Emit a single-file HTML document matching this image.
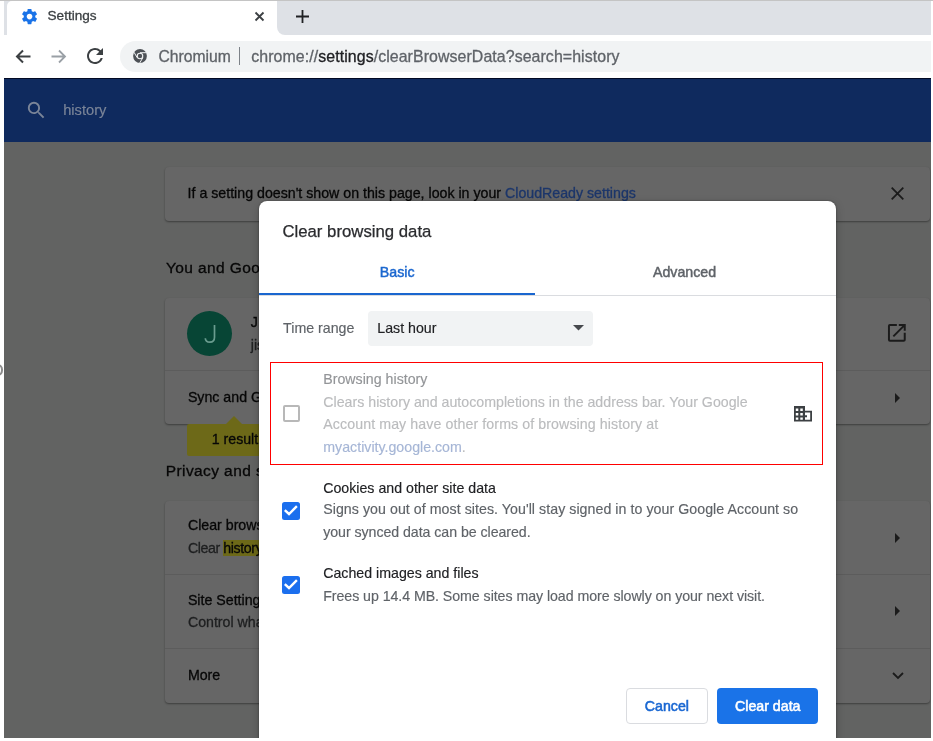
<!DOCTYPE html>
<html><head><meta charset="utf-8">
<style>
html,body{margin:0;padding:0;width:933px;height:741px;overflow:hidden;background:#fff;position:relative;filter:blur(0.3px);font-family:"Liberation Sans",sans-serif;}
.a{position:absolute;}
.t{position:absolute;white-space:nowrap;line-height:1;-webkit-text-stroke:0.15px currentColor;}
svg{position:absolute;overflow:visible;}
</style></head><body>

<!-- ===== Browser chrome ===== -->
<div class="a" style="left:0;top:0;width:933px;height:1px;background:#c4c4c4"></div>
<div class="a" style="left:4px;top:1px;width:927px;height:34px;background:#dee1e6"></div>
<!-- active tab -->
<div class="a" style="left:7px;top:1px;width:270px;height:34px;background:#fff;border-radius:5px 0 0 0"></div>
<div class="a" style="left:277px;top:1px;width:16px;height:34px;background:#fff"></div>
<div class="a" style="left:277px;top:1px;width:16px;height:34px;background:#dee1e6;border-bottom-left-radius:8px"></div>
<div class="a" style="left:0;top:35px;width:933px;height:43px;background:#fff"></div>
<!-- gear -->
<svg style="left:19.95px;top:6.95px" width="19.1" height="19.1" viewBox="0 0 24 24"><path fill="#1a73e8" d="M19.14 12.94c.04-.3.06-.61.06-.94 0-.32-.02-.64-.07-.94l2.03-1.58a.49.49 0 0 0 .12-.61l-1.92-3.32a.488.488 0 0 0-.59-.22l-2.39.96c-.5-.38-1.03-.7-1.62-.94l-.36-2.54a.484.484 0 0 0-.48-.41h-3.84c-.24 0-.43.17-.47.41l-.36 2.54c-.59.24-1.13.57-1.62.94l-2.39-.96c-.22-.08-.47 0-.59.22L2.74 8.87c-.12.21-.08.47.12.61l2.03 1.58c-.05.3-.09.63-.09.94s.02.64.07.94l-2.03 1.58a.49.49 0 0 0-.12.61l1.92 3.32c.12.22.37.29.59.22l2.39-.96c.5.38 1.03.7 1.62.94l.36 2.54c.05.24.24.41.48.41h3.84c.24 0 .44-.17.47-.41l.36-2.54c.59-.24 1.13-.56 1.62-.94l2.39.96c.22.08.47 0 .59-.22l1.92-3.32c.12-.22.07-.47-.12-.61l-2.01-1.58zM12 15.6c-1.98 0-3.6-1.62-3.6-3.6s1.62-3.6 3.6-3.6 3.6 1.62 3.6 3.6-1.62 3.6-3.6 3.6z"/></svg>
<div class="t" style="left:47.5px;top:9.3px;font-size:13.6px;-webkit-text-stroke:0.3px currentColor;color:#3c4043">Settings</div>
<!-- tab close -->
<svg style="left:255px;top:12px" width="9" height="9" viewBox="0 0 9 9"><path d="M0.5 0.5L8.5 8.5M8.5 0.5L0.5 8.5" stroke="#3c4043" stroke-width="1.8"/></svg>
<!-- new tab plus -->
<svg style="left:295.5px;top:10px" width="13" height="13" viewBox="0 0 13 13"><path d="M6.5 0V13M0 6.5H13" stroke="#202124" stroke-width="1.8"/></svg>

<!-- nav buttons -->
<svg style="left:14px;top:48px" width="18" height="18" viewBox="0 0 18 18"><path d="M16.5 8.5H3.5M9 2.5L3 8.5L9 14.5" fill="none" stroke="#3c4043" stroke-width="2"/></svg>
<svg style="left:50px;top:48px" width="18" height="18" viewBox="0 0 18 18"><path d="M1.5 8.5H14.5M9 2.5L15 8.5L9 14.5" fill="none" stroke="#9aa0a6" stroke-width="1.8"/></svg>
<svg style="left:83px;top:44px" width="24" height="24" viewBox="0 0 24 24"><path fill="#3c4043" d="M17.65 6.35A7.958 7.958 0 0 0 12 4c-4.42 0-7.99 3.58-7.99 8s3.57 8 7.99 8c3.73 0 6.84-2.55 7.73-6h-2.08A5.99 5.99 0 0 1 12 18c-3.31 0-6-2.69-6-6s2.69-6 6-6c1.66 0 3.14.69 4.22 1.78L13 11h7V4l-2.35 2.35z"/></svg>

<!-- omnibox -->
<div class="a" style="left:120px;top:41px;width:830px;height:31px;background:#f1f3f4;border-radius:15.5px"></div>
<svg style="left:133px;top:49px" width="14" height="14" viewBox="0 0 14 14">
  <circle cx="7" cy="7" r="6.9" fill="#4d5156"/>
  <circle cx="7" cy="7" r="3.3" fill="#f1f3f4"/>
  <circle cx="7" cy="7" r="2.2" fill="#4d5156"/>
  <path d="M7 3.7H13.3M4.15 8.65L1.0 3.2M9.85 8.65L6.7 14" stroke="#f1f3f4" stroke-width="1"/>
</svg>
<div class="t" style="left:158.5px;top:49px;font-size:15.7px;-webkit-text-stroke:0.3px currentColor;color:#5f6368">Chromium</div>
<div class="a" style="left:239px;top:47px;width:1.2px;height:18px;background:#7d8288"></div>
<div class="t" style="left:251.3px;top:48.8px;font-size:15.9px;letter-spacing:0.08px;-webkit-text-stroke:0.3px currentColor;color:#5f6368">chrome://<span style="color:#202124">settings</span>/clearBrowserData?search=history</div>

<!-- ===== Page (under scrim) ===== -->
<div class="a" style="left:4px;top:78px;width:927px;height:64px;background:#0f2a5e"></div>
<div class="a" style="left:4px;top:142px;width:927px;height:596px;background:#626362"></div>


<!-- search in header -->
<svg style="left:24.6px;top:99.1px" width="22.6" height="22.6" viewBox="0 0 24 24"><path fill="#7b8598" d="M15.5 14h-.79l-.28-.27A6.471 6.471 0 0 0 16 9.5 6.5 6.5 0 1 0 9.5 16c1.61 0 3.09-.59 4.23-1.57l.27.28v.79l5 4.99L20.49 19l-4.99-5zm-6 0C7.01 14 5 11.99 5 9.5S7.01 5 9.5 5 14 7.01 14 9.5 11.99 14 9.5 14z"/></svg>
<div class="t" style="left:63.2px;top:102.9px;font-size:14.7px;color:#7b8598">history</div>

<!-- info card -->
<div class="a" style="left:164.5px;top:167px;width:765px;height:54px;background:#666;border-radius:4px;box-shadow:0 1px 2px rgba(0,0,0,.38)"></div>
<div class="t" style="left:187.6px;top:185.7px;font-size:14.2px;-webkit-text-stroke:0.3px currentColor;color:#070707">If a setting doesn't show on this page, look in your <span style="color:#1c366a">CloudReady settings</span></div>
<svg style="left:890.5px;top:187px" width="13" height="13" viewBox="0 0 13 13"><path d="M0.7 0.7L12.3 12.3M12.3 0.7L0.7 12.3" stroke="#1b1b1b" stroke-width="1.8"/></svg>

<!-- You and Google -->
<div class="t" style="left:166px;top:260.3px;font-size:15.5px;letter-spacing:0.4px;-webkit-text-stroke:0.3px currentColor;color:#070707">You and Google</div>
<div class="a" style="left:164.5px;top:298px;width:765px;height:125.5px;background:#666;border-radius:4px;box-shadow:0 1px 2px rgba(0,0,0,.38)"></div>
<div class="a" style="left:186.9px;top:310.9px;width:45.6px;height:45.6px;border-radius:50%;background:#074535"></div>
<svg style="left:200px;top:320px" width="20" height="25" viewBox="0 0 20 25"><path d="M14.5 5V17.2C14.5 20.6 12.6 22.1 9.9 22.1C7.2 22.1 5.4 20.8 5.3 18.2" fill="none" stroke="#6a9c8f" stroke-width="1.7"/></svg>
<div class="t" style="left:250.8px;top:315.1px;font-size:14.2px;-webkit-text-stroke:0.3px currentColor;color:#070707">J</div>
<div class="t" style="left:250.8px;top:337.9px;font-size:14.2px;-webkit-text-stroke:0.3px currentColor;color:#1e1f20">jis</div>
<svg style="left:885.4px;top:321.3px" width="23.7" height="23.7" viewBox="0 0 24 24"><path fill="#1b1b1b" d="M19 19H5V5h7V3H5a2 2 0 0 0-2 2v14a2 2 0 0 0 2 2h14c1.1 0 2-.9 2-2v-7h-2v7zM14 3v2h3.59l-9.83 9.83 1.41 1.41L19 6.41V10h2V3h-7z"/></svg>
<div class="a" style="left:164.5px;top:370px;width:765px;height:1px;background:#5c5c5c"></div>
<div class="t" style="left:187.9px;top:390.3px;font-size:14.2px;-webkit-text-stroke:0.3px currentColor;color:#070707">Sync and Google services</div>
<svg style="left:895px;top:393px" width="5" height="10" viewBox="0 0 5 10"><path d="M0 0L5 5L0 10Z" fill="#1b1b1b"/></svg>

<!-- search bubble -->
<div class="a" style="left:187.3px;top:423.5px;width:120px;height:32.3px;background:#6d6918;border-radius:2px"></div>
<svg style="left:226px;top:416px" width="16" height="8" viewBox="0 0 16 8"><path d="M0 8L8 0L16 8Z" fill="#6d6918"/></svg>
<div class="t" style="left:211.7px;top:432px;font-size:14.2px;-webkit-text-stroke:0.3px currentColor;color:#070707">1 result</div>

<!-- Privacy and security -->
<div class="t" style="left:165.8px;top:463.1px;font-size:15.5px;letter-spacing:0.4px;-webkit-text-stroke:0.3px currentColor;color:#070707">Privacy and security</div>
<div class="a" style="left:164.5px;top:500.7px;width:765px;height:202px;background:#666;border-radius:4px;box-shadow:0 1px 2px rgba(0,0,0,.38)"></div>
<div class="t" style="left:187.9px;top:518.3px;font-size:14.2px;-webkit-text-stroke:0.3px currentColor;color:#070707">Clear browsing data</div>
<div class="t" style="left:187.9px;top:541px;font-size:14.2px;-webkit-text-stroke:0.3px currentColor;color:#1e1f20;letter-spacing:-0.4px">Clear <span style="color:#070707;background:#6d6918">history</span>, cookies, cache, and more</div>
<svg style="left:895px;top:533px" width="5" height="10" viewBox="0 0 5 10"><path d="M0 0L5 5L0 10Z" fill="#1b1b1b"/></svg>
<div class="a" style="left:164.5px;top:574px;width:765px;height:1px;background:#5c5c5c"></div>
<div class="t" style="left:187.9px;top:592.6px;font-size:14.2px;-webkit-text-stroke:0.3px currentColor;color:#070707">Site Settings</div>
<div class="t" style="left:187.9px;top:614.8px;font-size:14.2px;-webkit-text-stroke:0.3px currentColor;color:#1e1f20">Control what information websites can use and show</div>
<svg style="left:895px;top:606px" width="5" height="10" viewBox="0 0 5 10"><path d="M0 0L5 5L0 10Z" fill="#1b1b1b"/></svg>
<div class="a" style="left:164.5px;top:648px;width:765px;height:1px;background:#5c5c5c"></div>
<div class="t" style="left:187.9px;top:668.2px;font-size:14.2px;-webkit-text-stroke:0.3px currentColor;color:#070707">More</div>
<svg style="left:891.5px;top:672px" width="12" height="8" viewBox="0 0 12 8"><path d="M1 1L6 6L11 1" fill="none" stroke="#1b1b1b" stroke-width="1.8"/></svg>


<!-- ===== Dialog ===== -->
<div class="a" style="left:259.3px;top:201.3px;width:577.2px;height:560px;background:#fff;border-radius:8px;box-shadow:0 0 1.5px rgba(0,0,0,.55),0 3px 10px rgba(0,0,0,.22)"></div>
<div class="t" style="left:282.4px;top:223.7px;font-size:16.75px;-webkit-text-stroke:0.25px currentColor;color:#2a2b2e">Clear browsing data</div>
<div class="t" style="left:379.8px;top:264.8px;font-size:14.2px;-webkit-text-stroke:0.45px currentColor;color:#1b67cf">Basic</div>
<div class="t" style="left:653px;top:265.1px;font-size:14.2px;-webkit-text-stroke:0.45px currentColor;color:#5f6368">Advanced</div>
<div class="a" style="left:259px;top:295px;width:577px;height:1px;background:#dadce0"></div>
<div class="a" style="left:259px;top:293px;width:275.5px;height:2.3px;background:#1a66cf"></div>

<div class="t" style="left:283.1px;top:320.5px;font-size:14.2px;color:#5f6368">Time range</div>
<div class="a" style="left:368px;top:310.5px;width:224.5px;height:35.5px;background:#f1f3f4;border-radius:4px"></div>
<div class="t" style="left:377.3px;top:320.5px;font-size:14.2px;color:#202124">Last hour</div>
<svg style="left:572.6px;top:325.3px" width="11" height="6" viewBox="0 0 11 6"><path d="M0 0H11L5.5 5.5Z" fill="#46494d"/></svg>

<!-- red box -->
<div class="a" style="left:270px;top:362px;width:551px;height:100.5px;border:1px solid #ff0000"></div>
<div class="a" style="left:282.5px;top:405px;width:13px;height:13px;border:2px solid #b8b8b8;border-radius:2px"></div>
<div class="t" style="left:323.3px;top:372.3px;font-size:14.2px;color:#939598">Browsing history</div>
<div class="t" style="left:323.3px;top:394.7px;font-size:14.2px;color:#bbbcbe">Clears history and autocompletions in the address bar. Your Google</div>
<div class="t" style="left:323.3px;top:417.4px;font-size:14.2px;color:#bbbcbe;letter-spacing:0.09px">Account may have other forms of browsing history at</div>
<div class="t" style="left:323.3px;top:440px;font-size:14.2px;color:#a6b6d6">myactivity.google.com<span style="color:#bbbcbe">.</span></div>
<svg style="left:793.5px;top:406px" width="18" height="16" viewBox="0 0 18 16">
  <path fill="#3c4043" fill-rule="evenodd" d="M0 0H11V4.7H18V15.5H0ZM1.8 2.4V5H4.3V2.4ZM6.3 2.4V5H8.8V2.4ZM1.8 7V9.5H4.3V7ZM6.3 7V9.5H8.8V7ZM1.8 11.5V13.8H4.3V11.5ZM6.3 11.5V13.8H8.8V11.5ZM11 6.5V9.3H13V11.2H11V13.8H16.2V6.5Z"/>
</svg>

<!-- cookies -->
<div class="a" style="left:282.2px;top:502px;width:17.8px;height:17.5px;background:#1b6fee;border-radius:2.5px"></div>
<svg style="left:282.2px;top:502px" width="18" height="18" viewBox="0 0 18 18"><path d="M2.8 8.2L7 12L14.9 4.2" fill="none" stroke="#fff" stroke-width="2.4"/></svg>
<div class="t" style="left:323.2px;top:480.7px;font-size:14.2px;color:#202124">Cookies and other site data</div>
<div class="t" style="left:323.2px;top:502.1px;font-size:14.2px;color:#5f6368;letter-spacing:0.05px">Signs you out of most sites. You'll stay signed in to your Google Account so</div>
<div class="t" style="left:323.2px;top:524.8px;font-size:14.2px;color:#5f6368;letter-spacing:-0.05px">your synced data can be cleared.</div>

<!-- cached -->
<div class="a" style="left:282.2px;top:576.3px;width:17.8px;height:17.8px;background:#1b6fee;border-radius:2.5px"></div>
<svg style="left:282.2px;top:576.3px" width="18" height="18" viewBox="0 0 18 18"><path d="M2.8 8.2L7 12L14.9 4.2" fill="none" stroke="#fff" stroke-width="2.4"/></svg>
<div class="t" style="left:323.2px;top:566.3px;font-size:14.2px;color:#202124">Cached images and files</div>
<div class="t" style="left:323.2px;top:589px;font-size:14.2px;color:#5f6368;letter-spacing:-0.054px">Frees up 14.4 MB. Some sites may load more slowly on your next visit.</div>

<!-- buttons -->
<div class="a" style="left:626px;top:688px;width:80px;height:34px;border:1px solid #dadce0;border-radius:4px;background:#fff"></div>
<div class="t" style="left:644.8px;top:698.6px;font-size:14.2px;-webkit-text-stroke:0.55px currentColor;color:#1967d2">Cancel</div>
<div class="a" style="left:717px;top:688px;width:101px;height:35.5px;background:#1a73e8;border-radius:4px"></div>
<div class="t" style="left:735px;top:698.6px;font-size:14.2px;-webkit-text-stroke:0.55px currentColor;color:#fff">Clear data</div>

<!-- viewport frame -->
<div class="a" style="left:0;top:738px;width:933px;height:3px;background:#fff"></div>
<div class="a" style="left:0;top:78px;width:4px;height:663px;background:#fff"></div>
<div class="a" style="left:931px;top:35px;width:2px;height:706px;background:#fff"></div>

<!-- left ring -->
<div class="a" style="left:-8.4px;top:364.3px;width:7.4px;height:7.4px;border-radius:50%;border:2px solid #8c8c8c"></div>
<div class="a" style="left:4px;top:78px;width:927px;height:1.2px;background:#020a24"></div>
</body></html>
